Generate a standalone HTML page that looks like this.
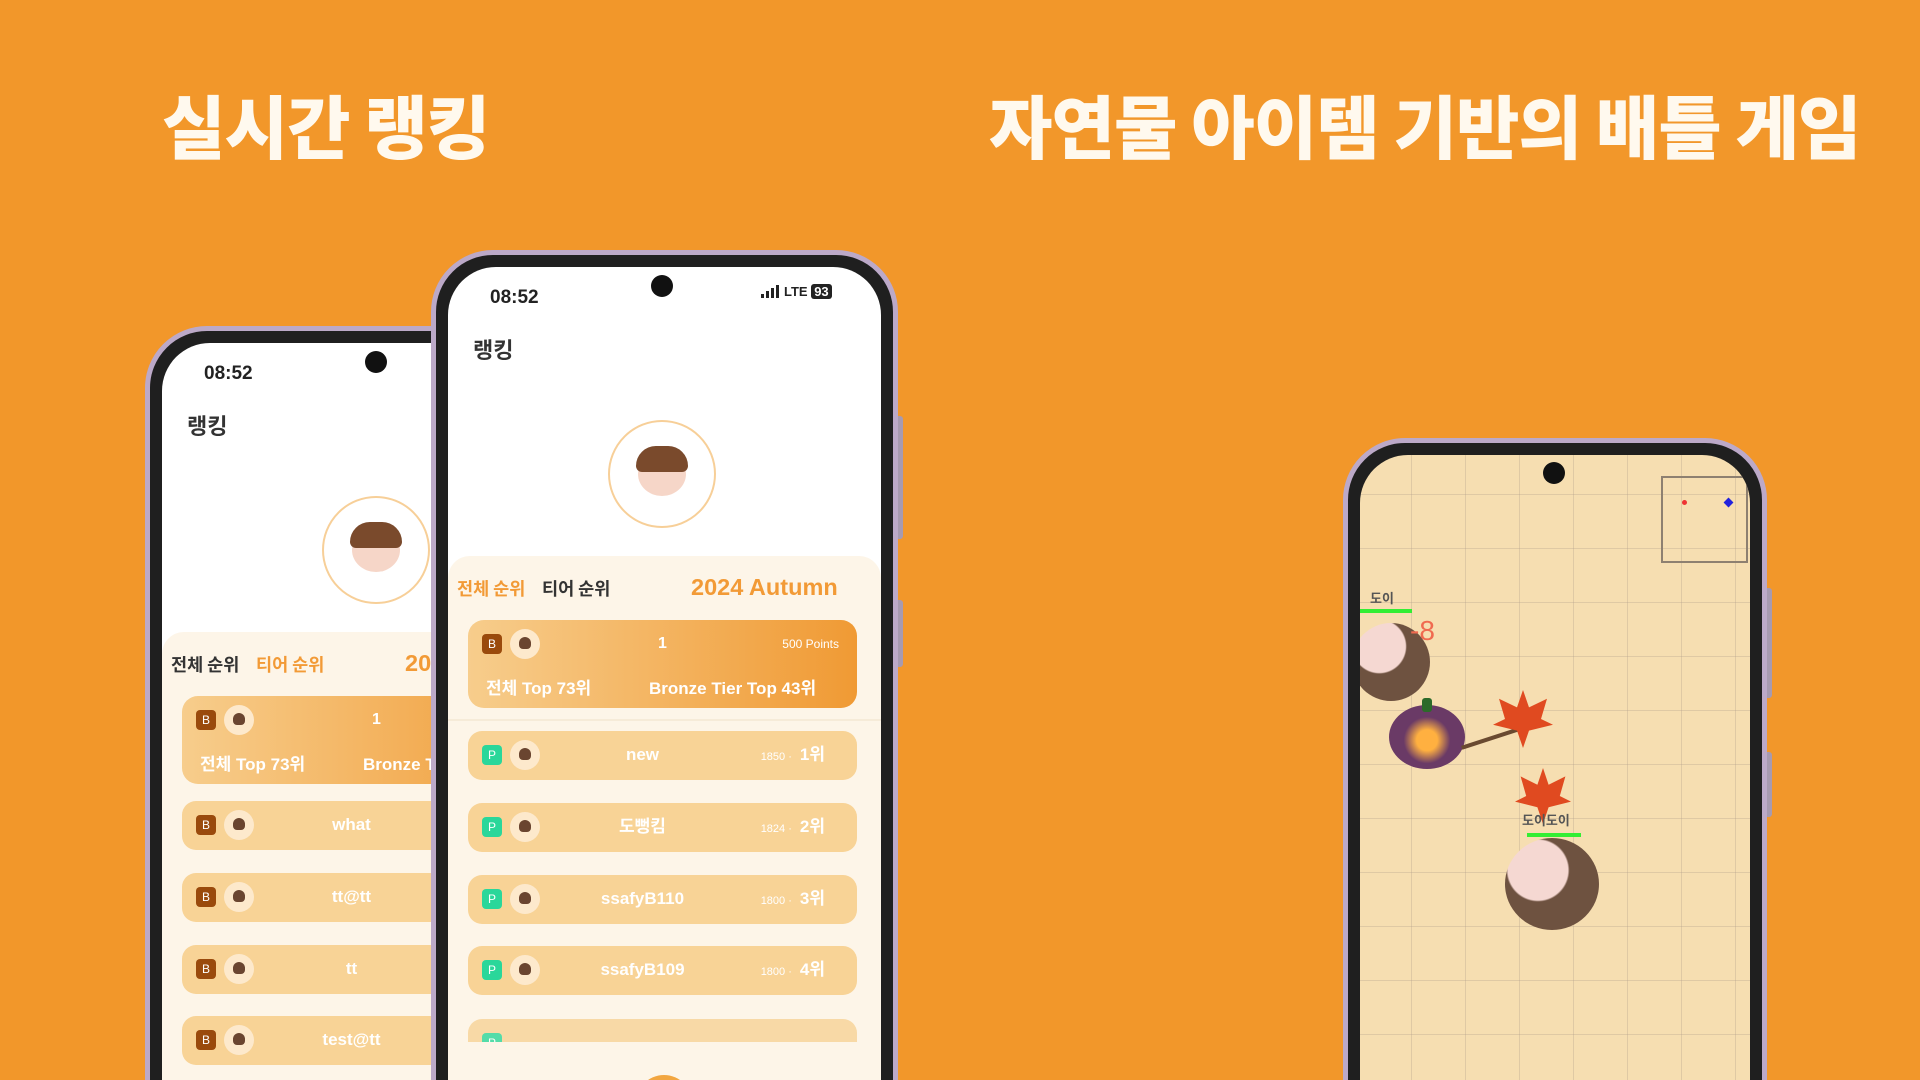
<!DOCTYPE html>
<html><head><meta charset="utf-8"><style>
*{margin:0;padding:0;box-sizing:border-box}
html,body{width:1920px;height:1080px;overflow:hidden}
body{background:#f2972a;font-family:"Liberation Sans","Noto Sans CJK KR",sans-serif}
#root{position:relative;width:1920px;height:1080px;overflow:hidden;background:#f2972a}
.title{position:absolute;top:82px;color:#fff9ee;font-size:69px;font-weight:900;font-family:"Noto Sans CJK KR",sans-serif;letter-spacing:-1px;white-space:nowrap;line-height:1.2}
.phone{position:absolute;border:5px solid #bca9c8;border-radius:62px;background:#1f1f1f;padding:12px}
.btn{position:absolute;width:5px;background:#a79ab0;border-radius:0 3px 3px 0}
.screen{position:relative;width:100%;height:100%;border-radius:48px;background:#fff;overflow:hidden}
.abs{position:absolute}
.time{font-size:19px;font-weight:bold;color:#222}
.cam{width:22px;height:22px;border-radius:50%;background:#111}
.hd{font-size:22px;font-weight:bold;color:#333;font-family:"Noto Sans CJK KR",sans-serif}
.av{width:108px;height:108px;border-radius:50%;border:2px solid #f7cf98;background:#fff}
.face{position:absolute;left:50%;top:50%;width:48px;height:44px;margin:-22px 0 0 -24px;border-radius:50%;background:#f6d6c8}
.face:before{content:"";position:absolute;left:-2px;top:-6px;width:52px;height:26px;border-radius:26px 26px 8px 8px;background:#7a4a2c}
.panel{left:0;top:289px;width:100%;height:900px;background:#fdf5e8;border-radius:22px 22px 0 0}
.tab{font-size:17.5px;font-weight:bold;font-family:"Noto Sans CJK KR",sans-serif}
.season{font-size:23.5px;font-weight:bold;color:#f29a36}
.card{left:20px;width:389px;height:88px;border-radius:16px;background:linear-gradient(90deg,#f7cd8c,#f09a34);color:#fff}
.row{left:20px;width:389px;height:49px;border-radius:14px;background:#f8d396;color:#fff}
.bd{position:absolute;width:20px;height:20px;border-radius:4px;font-size:12px;color:#fff;text-align:center;line-height:20px}
.B{background:#9a4a0c}.P{background:#2ad79a}
.mini{position:absolute;width:30px;height:30px;border-radius:50%;background:#fde9cc}
.mini:after{content:"";position:absolute;left:9px;top:8px;width:12px;height:12px;border-radius:6px 6px 4px 4px;background:#6a4530}
.nm{position:absolute;width:100%;text-align:center;font-size:17px;font-weight:bold;line-height:20px}
.sc{position:absolute;right:32px;font-size:17px;font-weight:bold;line-height:20px}
.sc small{font-size:11px;font-weight:normal;margin-right:8px}
.ct{position:absolute;font-size:17px;font-weight:bold;top:54px}
.leaf{position:absolute;background:#e04a20;clip-path:polygon(50% 0,60% 30%,90% 15%,80% 50%,100% 60%,60% 70%,50% 100%,40% 70%,0 60%,20% 50%,10% 15%,40% 30%)}
</style></head><body><div id="root">
<div class="title" style="left:162px">실시간 랭킹</div>
<div class="title" style="left:989px">자연물 아이템 기반의 배틀 게임</div>

<!-- left phone -->
<div class="phone" style="left:145px;top:326px;width:467px;height:900px">
<div class="screen">
<div class="abs time" style="left:42px;top:20px">08:52</div>
<div class="abs cam" style="left:203px;top:8px"></div>
<div class="abs hd" style="left:25px;top:66px">랭킹</div>
<div class="abs av" style="left:160px;top:153px"><div class="face"></div></div>
<div class="abs panel">
<div class="abs tab" style="left:9px;top:20px;color:#333">전체 순위</div>
<div class="abs tab" style="left:94px;top:20px;color:#f29a36">티어 순위</div>
<div class="abs season" style="left:243px;top:18px">2024 Autumn</div>
</div>
<div class="abs card" style="top:353px"><div class="bd B" style="left:14px;top:14px">B</div><div class="mini" style="left:42px;top:9px"></div><div class="nm" style="top:14px;font-size:16px">1</div><div class="ct" style="left:18px">전체 Top 73위</div><div class="ct" style="left:181px">Bronze Tier Top 43위</div></div>
<div class="abs row" style="top:458px"><div class="bd B" style="left:14px;top:14px">B</div><div class="mini" style="left:42px;top:9px"></div><div class="nm" style="top:14px;left:-25px">what</div></div>
<div class="abs row" style="top:530px"><div class="bd B" style="left:14px;top:14px">B</div><div class="mini" style="left:42px;top:9px"></div><div class="nm" style="top:14px;left:-25px">tt@tt</div></div>
<div class="abs row" style="top:602px"><div class="bd B" style="left:14px;top:14px">B</div><div class="mini" style="left:42px;top:9px"></div><div class="nm" style="top:14px;left:-25px">tt</div></div>
<div class="abs row" style="top:673px"><div class="bd B" style="left:14px;top:14px">B</div><div class="mini" style="left:42px;top:9px"></div><div class="nm" style="top:14px;left:-25px">test@tt</div></div>
</div></div>

<!-- center phone -->
<div class="btn" style="left:898px;top:416px;height:123px"></div>
<div class="btn" style="left:898px;top:600px;height:67px"></div>
<div class="phone" style="left:431px;top:250px;width:467px;height:900px">
<div class="screen">
<div class="abs time" style="left:42px;top:20px">08:52</div>
<div class="abs cam" style="left:203px;top:8px"></div>
<div class="abs" style="left:313px;top:27px;width:3px;height:4px;background:#222"></div>
<div class="abs" style="left:318px;top:24px;width:3px;height:7px;background:#222"></div>
<div class="abs" style="left:323px;top:21px;width:3px;height:10px;background:#222"></div>
<div class="abs" style="left:328px;top:18px;width:3px;height:13px;background:#222"></div>
<div class="abs" style="left:336px;top:18px;font-size:13px;font-weight:bold;color:#222;line-height:14px">LTE <span style="background:#222;color:#fff;border-radius:3px;padding:0 3px">93</span></div>
<div class="abs hd" style="left:25px;top:66px">랭킹</div>
<div class="abs av" style="left:160px;top:153px"><div class="face"></div></div>
<div class="abs panel">
<div class="abs tab" style="left:9px;top:20px;color:#f29a36">전체 순위</div>
<div class="abs tab" style="left:94px;top:20px;color:#333">티어 순위</div>
<div class="abs season" style="left:243px;top:18px">2024 Autumn</div>
</div>
<div class="abs card" style="top:353px"><div class="bd B" style="left:14px;top:14px">B</div><div class="mini" style="left:42px;top:9px"></div><div class="nm" style="top:14px;font-size:16px">1</div><div class="abs" style="right:18px;top:17px;font-size:12px">500 Points</div><div class="ct" style="left:18px">전체 Top 73위</div><div class="ct" style="left:181px">Bronze Tier Top 43위</div></div>
<div class="abs" style="left:0;top:452px;width:100%;height:2px;background:#f6ebd8"></div>
<div class="abs row" style="top:464px"><div class="bd P" style="left:14px;top:14px">P</div><div class="mini" style="left:42px;top:9px"></div><div class="nm" style="top:14px;left:-20px">new</div><div class="sc" style="top:14px"><small>1850 ·</small>1위</div></div>
<div class="abs row" style="top:536px"><div class="bd P" style="left:14px;top:14px">P</div><div class="mini" style="left:42px;top:9px"></div><div class="nm" style="top:14px;left:-20px">도뻥킴</div><div class="sc" style="top:14px"><small>1824 ·</small>2위</div></div>
<div class="abs row" style="top:608px"><div class="bd P" style="left:14px;top:14px">P</div><div class="mini" style="left:42px;top:9px"></div><div class="nm" style="top:14px;left:-20px">ssafyB110</div><div class="sc" style="top:14px"><small>1800 ·</small>3위</div></div>
<div class="abs row" style="top:679px"><div class="bd P" style="left:14px;top:14px">P</div><div class="mini" style="left:42px;top:9px"></div><div class="nm" style="top:14px;left:-20px">ssafyB109</div><div class="sc" style="top:14px"><small>1800 ·</small>4위</div></div>
<div class="abs" style="left:20px;top:752px;width:389px;height:23px;overflow:hidden;opacity:.8"><div class="abs row" style="left:0;top:0"><div class="bd P" style="left:14px;top:14px">P</div></div></div>
<div class="abs" style="left:188px;top:808px;width:56px;height:56px;border-radius:50%;background:#f2a640"></div>
</div></div>

<!-- right phone -->
<div class="btn" style="left:1767px;top:588px;height:110px"></div>
<div class="btn" style="left:1767px;top:752px;height:65px"></div>
<div class="phone" style="left:1343px;top:438px;width:424px;height:800px">
<div class="screen" style="background-color:#f6deb1;background-image:linear-gradient(90deg,rgba(180,160,140,.35) 1px,transparent 1px),linear-gradient(rgba(180,160,140,.35) 1px,transparent 1px);background-size:54px 54px;background-position:51px 39px">
<div class="abs cam" style="left:183px;top:7px"></div>
<div class="abs" style="left:301px;top:21px;width:87px;height:87px;border:2px solid #8e8070"></div>
<div class="abs" style="left:322px;top:45px;width:5px;height:5px;border-radius:50%;background:#e33"></div>
<div class="abs" style="left:365px;top:44px;width:7px;height:7px;background:#22d;transform:rotate(45deg)"></div>
<div class="abs" style="left:10px;top:133px;font-size:13px;color:#555;font-weight:bold">도이</div>
<div class="abs" style="left:0;top:154px;width:52px;height:4px;background:#3e3"></div>
<div class="abs" style="left:-8px;top:168px;width:78px;height:78px;border-radius:50%;background:radial-gradient(circle at 35% 30%,#f5d8d2 35%,#6e5240 37%)"></div>
<div class="abs" style="left:50px;top:160px;font-size:28px;color:#f06a50">-8</div>
<div class="abs" style="left:29px;top:250px;width:76px;height:64px;border-radius:50%;background:radial-gradient(circle at 50% 55%,#ffb040 20%,#6a3a66 45%)"></div>
<div class="abs" style="left:62px;top:243px;width:10px;height:14px;background:#2c6a2a;border-radius:3px"></div>
<div class="abs" style="left:100px;top:280px;width:70px;height:4px;background:#6a4a30;transform:rotate(-18deg)"></div>
<div class="leaf" style="left:133px;top:235px;width:60px;height:58px"></div>
<div class="leaf" style="left:155px;top:313px;width:56px;height:56px"></div>
<div class="abs" style="left:162px;top:355px;font-size:13px;color:#555;font-weight:bold">도이도이</div>
<div class="abs" style="left:167px;top:378px;width:54px;height:4px;background:#3e3"></div>
<div class="abs" style="left:145px;top:383px;width:94px;height:92px;border-radius:50%;background:radial-gradient(circle at 35% 35%,#f5d8d2 35%,#6e5240 37%)"></div>
</div></div>
</div></body></html>
